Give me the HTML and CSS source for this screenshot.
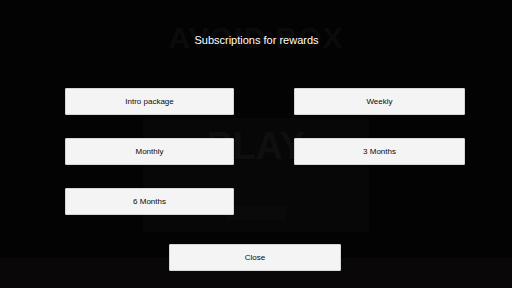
FILE: index.html
```html
<!DOCTYPE html>
<html>
<head>
<meta charset="utf-8">
<link rel="stylesheet" href="styles.css">
</head>
<body>
<div class="screen">
  <div class="game">
    <div class="game-title">AVOID BOX</div>
    <div class="play-panel">
      <div class="play-text">PLAY</div>
      <div class="play-sub"></div>
    </div>
    <div class="floor"></div>
  </div>
  <div class="overlay">
    <h1 class="title">Subscriptions for rewards</h1>
    <div class="options">
      <button class="btn">Intro package</button>
      <button class="btn">Weekly</button>
      <button class="btn">Monthly</button>
      <button class="btn">3 Months</button>
      <button class="btn">6 Months</button>
    </div>
    <button class="btn close">Close</button>
  </div>
</div>
</body>
</html>
```

FILE: styles.css
```css
html, body {
  margin: 0;
  padding: 0;
  background: #030303;
}
.screen {
  position: relative;
  width: 512px;
  height: 288px;
  overflow: hidden;
  background: #030303;
  font-family: "Liberation Sans", Arial, sans-serif;
}
.game {
  display: flex;
  flex-direction: column;
  align-items: center;
  height: 100%;
}
.game-title {
  margin-top: 22px;
  font-size: 30px;
  font-weight: bold;
  color: #0b0b0b;
  letter-spacing: 1px;
  line-height: 32px;
}
.play-panel {
  margin-top: 64px;
  width: 226px;
  height: 114px;
  background: #070707;
  display: flex;
  flex-direction: column;
  align-items: center;
}
.play-text {
  margin-top: 6px;
  font-size: 38px;
  font-weight: bold;
  color: #0f0f0f;
  line-height: 44px;
}
.play-sub {
  margin-top: 38px;
  width: 60px;
  height: 14px;
  background: #0a0a0a;
}
.floor {
  margin-top: auto;
  width: 100%;
  height: 30px;
  background: #090707;
}
.overlay {
  position: absolute;
  inset: 0;
  display: flex;
  flex-direction: column;
}
.title {
  margin: 0;
  padding-top: 34px;
  font-size: 11px;
  line-height: 13px;
  font-weight: normal;
  color: #ffffff;
  text-align: center;
  padding-left: 1px;
}
.options {
  margin-top: 41px;
  margin-left: 65px;
  display: grid;
  grid-template-columns: 169px 171px;
  grid-auto-rows: 27px;
  column-gap: 60px;
  row-gap: 23px;
}
.btn {
  margin: 0;
  padding: 0;
  border: 1px solid #d6d6d6;
  background: #f4f4f4;
  color: #0a0a0a;
  font-family: "Liberation Sans", Arial, sans-serif;
  font-size: 8px;
  text-align: center;
  border-radius: 1px;
}
.close {
  margin-top: 29px;
  margin-left: 169px;
  width: 172px;
  height: 27px;
}
```
